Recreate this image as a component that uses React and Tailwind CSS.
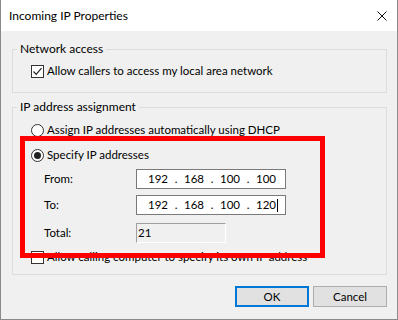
import React from "react";

const FONT = { fontFamily: 'Lato, "Liberation Sans", sans-serif' };

function Checkbox({ checked }) {
  return (
    <span className="flex h-[13px] w-[13px] shrink-0 items-center justify-center border border-[#333333] bg-white">
      {checked && (
        <svg width="11" height="11" viewBox="0 0 11 11">
          <path d="M1.5 5.5 L4.2 8.3 L9.5 2.2" fill="none" stroke="#222222" strokeWidth="1.2" />
        </svg>
      )}
    </span>
  );
}

function Radio({ checked }) {
  return (
    <span className="flex h-[13px] w-[13px] shrink-0 items-center justify-center rounded-full border border-[#333333] bg-white">
      {checked && <span className="h-[7px] w-[7px] rounded-full bg-[#222222]" />}
    </span>
  );
}

function IpBox({ octets, cursor }) {
  return (
    <div className="flex h-[20px] w-[150px] items-center border border-[#7a7a7a] bg-white pl-[8px] text-black">
      {octets.map((o, i) => (
        <React.Fragment key={i}>
          {i > 0 && <span className="w-[10px] text-center">.</span>}
          <span className="flex w-[26px] items-center justify-center">
            {o}
            {cursor && i === octets.length - 1 && (
              <span className="ml-px mr-[-2px] inline-block h-[13px] w-px bg-black" />
            )}
          </span>
        </React.Fragment>
      ))}
    </div>
  );
}

export default function App() {
  return (
    <div
      className="relative flex h-[320px] w-[398px] flex-col border-x border-b border-[#8a8a8a] bg-[#f0f0f0] text-[11.5px] leading-[16px] text-black"
      style={FONT}
    >
      <div className="flex h-[31px] shrink-0 items-center justify-between bg-white pl-[8px] pr-[10px]">
        <span className="text-[12px]">Incoming IP Properties</span>
        <svg width="10" height="10" viewBox="0 0 10 10">
          <path d="M0.5 0.5 L9.5 9.5 M9.5 0.5 L0.5 9.5" stroke="#111111" strokeWidth="1" />
        </svg>
      </div>

      <div className="flex flex-col pl-[11px] pr-[10px] pt-[10px]">
        <fieldset className="border border-[#dcdcdc] px-0 pb-[13px]">
          <legend className="ml-[4px] px-[3px] text-[12px] leading-[16px]">Network access</legend>
          <label className="mt-[6px] flex h-[16px] items-center gap-[3px] pl-[18px]">
            <Checkbox checked />
            <span>Allow callers to access my local area network</span>
          </label>
        </fieldset>

        <fieldset className="mt-[6px] border border-[#dcdcdc] px-0 pb-[9px]">
          <legend className="ml-[4px] px-[3px] text-[12px] leading-[16px]">IP address assignment</legend>
          <label className="mt-[7px] flex h-[16px] items-center gap-[3px] pl-[18px]">
            <Radio />
            <span>Assign IP addresses automatically using DHCP</span>
          </label>
          <label className="mt-[9px] flex h-[16px] items-center gap-[3px] pl-[18px]">
            <Radio checked />
            <span>Specify IP addresses</span>
          </label>

          <div className="mt-[6px] flex items-center pl-[31px]">
            <span className="w-[92px]">From:</span>
            <IpBox octets={["192", "168", "100", "100"]} />
          </div>
          <div className="mt-[6px] flex items-center pl-[31px]">
            <span className="w-[92px]">To:</span>
            <IpBox octets={["192", "168", "100", "120"]} cursor />
          </div>
          <div className="mt-[8px] flex items-center pl-[31px]">
            <span className="w-[92px]">Total:</span>
            <div className="flex h-[20px] w-[90px] items-center border border-[#a0a0a0] border-b-white border-r-white bg-[#f0f0f0] pl-[1px]">
              21
            </div>
          </div>

          <label className="mt-[6px] flex h-[16px] items-center gap-[3px] pl-[18px]">
            <Checkbox />
            <span>Allow calling computer to specify its own IP address</span>
          </label>
        </fieldset>

        <div className="mt-[11px] flex justify-end gap-[4px]">
          <button className="flex h-[21px] w-[74px] items-center justify-center border-2 border-[#0078d7] bg-[#e1e1e1]">
            OK
          </button>
          <button className="flex h-[21px] w-[74px] items-center justify-center border border-[#adadad] bg-[#e1e1e1]">
            Cancel
          </button>
        </div>
      </div>

      <div className="pointer-events-none absolute left-[19px] top-[136px] h-[122px] w-[305px] border-[5px] border-[#ff0000]" />
    </div>
  );
}
